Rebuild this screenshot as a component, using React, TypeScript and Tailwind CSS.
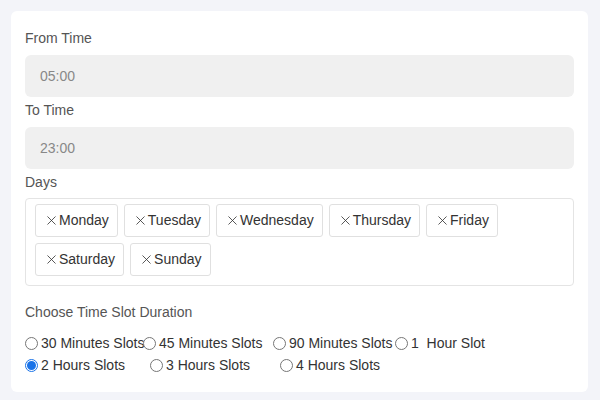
import { X } from 'lucide-react';

const days = ['Monday', 'Tuesday', 'Wednesday', 'Thursday', 'Friday', 'Saturday', 'Sunday'];

function Radio({ label, checked, w }: { label: string; checked?: boolean; w: string }) {
  return (
    <label className={`flex items-center gap-[3px] shrink-0 whitespace-pre ${w}`}>
      <span
        className={`w-[13px] h-[13px] shrink-0 rounded-full border flex items-center justify-center bg-white ${
          checked ? 'border-[#1a73e8]' : 'border-[#767676]'
        }`}
      >
        {checked && <span className="w-[9px] h-[9px] rounded-full bg-[#1a73e8]" />}
      </span>
      <span>{label}</span>
    </label>
  );
}

export default function App() {
  return (
    <div className="w-[600px] h-[400px] bg-[#f3f4f9] pt-[11px] px-[11px] text-[14px] text-[#555]" style={{ fontFamily: '"Liberation Sans", Arial, sans-serif' }}>
      <div className="w-[577px] h-[381px] bg-white rounded-[6px] px-[14px] pt-[18px]">
        <div className="h-[26px] leading-[18px]">From Time</div>
        <div className="h-[42px] bg-[#f0f0f0] rounded-[6px] flex items-center pl-[15px] text-[#888]">05:00</div>
        <div className="h-[30px] pt-[4px] leading-[18px]">To Time</div>
        <div className="h-[42px] bg-[#f0f0f0] rounded-[6px] flex items-center pl-[15px] text-[#888]">23:00</div>
        <div className="h-[29px] pt-[4px] leading-[18px]">Days</div>
        <div className="h-[88px] border border-[#e4e4e4] rounded-[4px] pl-[9px] pt-[5px] flex flex-wrap gap-x-[6px] gap-y-[6px] content-start text-[#333]">
          {days.map(d => (
            <div key={d} className="h-[33px] border border-[#e0e0e0] rounded-[3px] flex items-center pl-[8px] pr-[8px]">
              <X size={15} strokeWidth={1.3} />
              <span>{d}</span>
            </div>
          ))}
        </div>
        <div className="mt-[17px] leading-[18px]">Choose Time Slot Duration</div>
        <div className="mt-[11px] flex leading-[22px] text-[#333]">
          <Radio w="w-[118px]" label="30 Minutes Slots" />
          <Radio w="w-[130px]" label="45 Minutes Slots" />
          <Radio w="w-[122px]" label="90 Minutes Slots" />
          <Radio w="w-[120px]" label="1  Hour Slot" />
        </div>
        <div className="flex leading-[22px] text-[#333]">
          <Radio w="w-[125px]" label="2 Hours Slots" checked />
          <Radio w="w-[130px]" label="3 Hours Slots" />
          <Radio w="w-[130px]" label="4 Hours Slots" />
        </div>
      </div>
    </div>
  );
}
